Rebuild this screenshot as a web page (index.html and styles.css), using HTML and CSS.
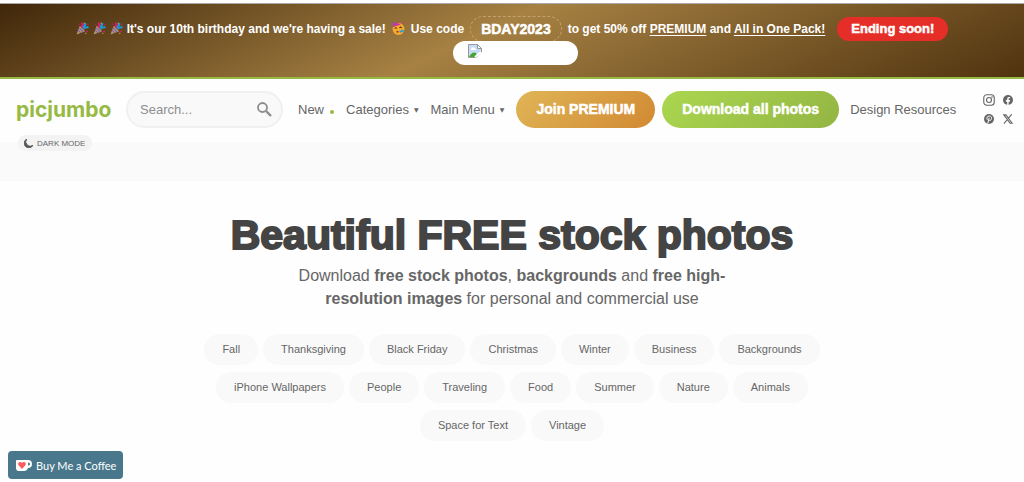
FILE: index.html
```html
<!DOCTYPE html>
<html lang="en">
<head>
<meta charset="utf-8">
<meta name="viewport" content="width=device-width, initial-scale=1">
<title>picjumbo: Free Stock Photos</title>
<link rel="stylesheet" href="styles.css">
</head>
<body>
<svg class="defs" aria-hidden="true">
  <symbol id="party" viewBox="0 0 24 24">
    <path d="M1 23 7 7l10 10z" fill="#b89a6a"/>
    <path d="m4 15 5 5M6 11l7 7" stroke="#7a5bc0" stroke-width="2"/>
    <path d="M9 9c3-2 3-5 1-8M12 12c1-5 4-8 7-9" fill="none" stroke="#e2186f" stroke-width="3"/>
    <path d="M14 13c2-4 5-2 9-4M13 10c2-1 4-4 4-8" fill="none" stroke="#159bd3" stroke-width="4"/>
    <path d="M4 3h2v2H4zM19 16h3v3h-3zM21 4h2v2h-2z" fill="#e2186f"/>
    <path d="M14 1h2v2h-2zM17 20h2v2h-2z" fill="#d3a33a"/>
  </symbol>
</svg>
<aside class="banner">
  <p class="banner-line">
    <svg class="emoji"><use href="#party"/></svg>
    <svg class="emoji"><use href="#party"/></svg>
    <svg class="emoji"><use href="#party"/></svg>
    <span>It's our 10th birthday and we're having a sale!</span>
    <svg class="emoji face" viewBox="0 0 24 24">
      <circle cx="12" cy="13" r="11" fill="#f5ab2e"/>
      <path d="M1 9 2 0l14 4z" fill="#8a4bc9"/>
      <path d="m3 4 9-2M2 8l13-4" stroke="#e8308a" stroke-width="2"/>
      <path d="M5 12q2-3 4 0M14 11q2-3 4 0" fill="none" stroke="#5a3614" stroke-width="2"/>
      <path d="m13 17 7-3 3 3-8 3z" fill="#2f9fd0"/>
      <circle cx="10" cy="18" r="2" fill="#b9302a"/>
      <path d="M20 1h3v3h-3zM21 20h2v2h-2z" fill="#e8308a"/>
    </svg>
    <span>Use code</span>
    <strong class="code">BDAY2023</strong>
    <span>to get 50% off <a href="#premium">PREMIUM</a> and <a href="#pack">All in One Pack!</a></span>
    <a class="ending" href="#sale">Ending soon!</a>
  </p>
  <a class="banner-card" href="#sale" aria-label="Sale">
    <svg width="14" height="14" viewBox="0 0 14 14">
      <path d="M.5.5h9l4 4v9H.5z" fill="#c7dcf7" stroke="#999"/>
      <path d="M3 5q1-3 3-1 2 0 2 2H3z" fill="#fff"/>
      <path d="M1 13q3-6 7-4l2 4z" fill="#45a52e"/>
      <path d="m8 14 6-6v6z" fill="#fff"/>
      <path d="m7 13 6-5" stroke="#fff" stroke-width="2"/>
      <path d="M9.500.5v4h4z" fill="#fff" stroke="#999"/>
    </svg>
  </a>
</aside>
<header class="header">
  <a class="logo" href="#home">picjumbo</a>
  <form class="search" role="search">
    <input type="search" aria-label="Search" placeholder="Search...">
    <button type="submit" aria-label="Search">
      <svg width="15" height="15" viewBox="0 0 15 15" fill="none" stroke="#8d8d8d"><circle cx="5.500" cy="5.500" r="4.500" stroke-width="1.800"/><path d="m9 9 5 5" stroke-width="2.400"/></svg>
    </button>
  </form>
  <nav class="nav">
    <a class="new" href="#new">New</a>
    <a class="drop" href="#categories">Categories</a>
    <a class="drop" href="#menu">Main Menu</a>
    <a class="cta gold" href="#premium">Join PREMIUM</a>
    <a class="cta green" href="#download">Download all photos</a>
    <a class="resources" href="#resources">Design Resources</a>
  </nav>
  <div class="social">
    <a href="#instagram" aria-label="Instagram"><svg viewBox="0 0 24 24" fill="none" stroke="currentColor" stroke-width="2.200"><rect x="1.500" y="1.500" width="21" height="21" rx="6"/><circle cx="12" cy="12" r="5"/><circle cx="18" cy="6" r="1" fill="currentColor" stroke-width="1"/></svg></a>
    <a href="#facebook" aria-label="Facebook"><svg class="small" viewBox="0 0 24 24"><circle cx="12" cy="12" r="12" fill="currentColor"/><path d="M10 24v-8H7v-4h3V9q0-4 4-4h3v3h-2q-1.500 0-1.500 1.500V12H17l-.6 4h-2.900v8z" fill="#fff"/></svg></a>
    <a href="#pinterest" aria-label="Pinterest"><svg class="small" viewBox="0 0 24 24" fill="none"><circle cx="12" cy="12" r="12" fill="currentColor"/><path d="M8 14c-3-5 0-9 5-9 4 0 6 3 5 6-1 5-5 6-6 3M12.500 9 9 23" stroke="#fff" stroke-width="2.400"/></svg></a>
    <a href="#x" aria-label="X"><svg class="small" viewBox="0 0 24 24" fill="none" stroke="currentColor" stroke-width="2.600"><path d="M2 2h5l15 20h-5zM21 1l-8.500 9.500M10.500 13.500 2 23"/></svg></a>
  </div>
  <button class="dark" type="button"><svg width="9" height="9" viewBox="0 0 10 10"><path d="M3 0a5.200 5.200 0 1 0 7 7A5 5 0 0 1 3 0z" fill="#555" stroke="#555"/></svg>DARK MODE</button>
</header>
<div class="strip"></div>
<main class="hero">
  <h1>Beautiful FREE stock photos</h1>
  <p class="lead">Download <b>free stock photos</b>, <b>backgrounds</b> and <b>free high-resolution images</b> for personal and commercial use</p>
  <ul class="tags">
    <li><a href="#t">Fall</a></li><li><a href="#t">Thanksgiving</a></li><li><a href="#t">Black Friday</a></li><li><a href="#t">Christmas</a></li><li><a href="#t">Winter</a></li><li><a href="#t">Business</a></li><li><a href="#t">Backgrounds</a></li><li><a href="#t">iPhone Wallpapers</a></li><li><a href="#t">People</a></li><li><a href="#t">Traveling</a></li><li><a href="#t">Food</a></li><li><a href="#t">Summer</a></li><li><a href="#t">Nature</a></li><li><a href="#t">Animals</a></li><li><a href="#t">Space for Text</a></li><li><a href="#t">Vintage</a></li>
  </ul>
</main>
<a class="coffee" href="#coffee">
  <svg width="16" height="11" viewBox="0 0 16 11"><path d="M1 0h11q4 0 4 4t-4 4q-1 3-4 3H3q-3 0-3-3V1q0-1 1-1z" fill="#fff"/><path d="M12 2.500v3q2 0 2-1.500t-2-1.500z" fill="#49788c"/><path d="M6 9 2.600 5.300C1 3 4.300.8 6 3c1.700-2.200 5 0 3.400 2.300z" fill="#ff5a5f"/></svg>
  Buy Me a Coffee
</a>
</body>
</html>
```
FILE: styles.css
```css
* { box-sizing: border-box; }
body { margin: 0; padding-top: 3px; background: #fefefe; color: #666; font-family: "Liberation Sans", Arial, sans-serif; font-size: 13px; }
a { color: inherit; text-decoration: none; }
.defs { position: absolute; width: 0; height: 0; }

.banner { display: flex; flex-direction: column; align-items: center; padding: 12px 0 12px; border-top: 1px solid #aaa; border-bottom: 2px solid #96ba44; background: linear-gradient(155deg, #40270a, #a68143 46%, #50330f); color: #fff; font-weight: bold; }
.banner-line { display: flex; align-items: center; justify-content: center; height: 25px; margin: 0; font-size: 12px; white-space: nowrap; }
.banner-line span a { text-decoration: underline; text-underline-offset: 2px; }
.emoji { width: 13px; height: 13px; margin-right: 4px; }
.face { margin: 0 6px; }
.code { margin: 0 6px; padding: 0 10px; border: 1px dashed #c4a06c; border-radius: 13px; font-size: 14px; line-height: 24px; -webkit-text-stroke: 0.5px; }
.ending { margin-left: 12px; padding: 0 14px; border-radius: 12px; background: #e52e28; font-size: 13px; line-height: 24px; -webkit-text-stroke: 0.5px; }
.banner-card { width: 125px; height: 24px; margin-left: 6px; padding: 3px 15px; border-radius: 12px; background: #fff; }

.header { position: relative; display: flex; align-items: center; height: 63px; padding: 0 10px 2px 16px; }
.logo { width: 94px; color: #96ba44; font-family: Inter, sans-serif; font-size: 21px; font-weight: 700; line-height: 30px; }
.search { display: flex; align-items: center; width: 157px; height: 37px; margin-left: 16px; padding: 0 9px 0 12px; border: 2px solid #f0f0f0; border-radius: 19px; background: #f9f9f9; }
.search input { flex: 1; min-width: 0; padding: 0; border: 0; outline: 0; background: none; color: #666; font: inherit; }
.search input::placeholder { color: #8d8d8d; }
.search button { display: flex; padding: 0; border: 0; background: none; }
.nav { display: flex; align-items: center; margin-left: 15px; white-space: nowrap; }
.new::after { content: ""; display: inline-block; width: 4px; height: 4px; margin: 0 12px 0 6px; border-radius: 50%; background: #96ba44; }
.drop::after { content: "▼"; margin: 0 12px 0 5px; font: 6px "DejaVu Sans", sans-serif; vertical-align: 2px; }
.cta { height: 37px; padding: 0 20px; border-radius: 19px; color: #fff; font-size: 14px; font-weight: bold; line-height: 37px; -webkit-text-stroke: 0.5px; }
.gold { background: linear-gradient(135deg, #e0b557, #d18932); }
.green { margin-left: 7px; background: linear-gradient(135deg, #abd750, #93b543); }
.resources { margin-left: 11px; }
.social { display: grid; grid-template-columns: 12px 12px; grid-auto-rows: 12px; gap: 7px; margin-left: auto; color: #666; }
.social a { display: grid; place-items: center; }
.social svg { width: 12px; height: 12px; }
.social .small { width: 10px; height: 10px; }
.dark { position: absolute; top: 56px; left: 18px; display: flex; align-items: center; gap: 4px; height: 16px; padding: 0 7px 0 6px; border: 0; border-radius: 8px; background: #f3f3f3; color: #666; font: 8px "Liberation Sans", Arial, sans-serif; }
.strip { height: 39px; background: #fafafa; }

.hero { padding: 31px 16px 40px; text-align: center; }
h1 { margin: 0; color: #444; font-size: 41px; line-height: 46px; -webkit-text-stroke: 2px; }
.lead { max-width: 480px; margin: 6px auto 24px; font-size: 16px; line-height: 23px; }
.tags { display: flex; flex-wrap: wrap; justify-content: center; gap: 7px 5px; max-width: 640px; margin: 0 auto; padding: 0; list-style: none; font-size: 11px; }
.tags a { display: block; padding: 0 18px; border-radius: 16px; background: #f9f9f9; line-height: 31px; }
.coffee { position: fixed; bottom: 3px; left: 8px; display: flex; align-items: center; gap: 4px; height: 28px; padding: 0 7px 0 8px; border-radius: 4px; background: #49788c; color: #fff; font: 11px Lato, sans-serif; }
```
